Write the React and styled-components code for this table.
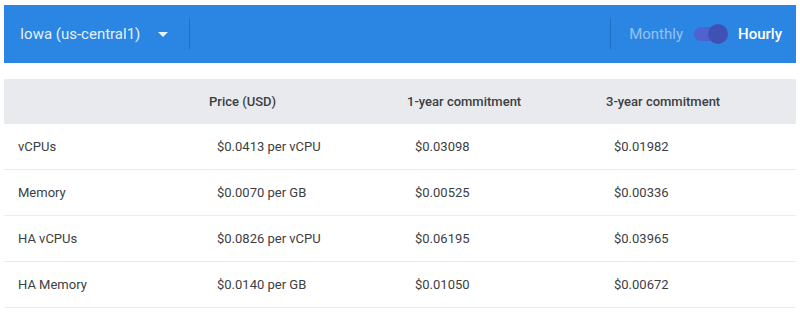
import React from "react";
import styled, { createGlobalStyle } from "styled-components";

const Global = createGlobalStyle`
  html, body { margin: 0; padding: 0; background: #fff; }
  body { font-family: Roboto, "Noto Sans", Arial, sans-serif; }
`;

const Page = styled.div`
  padding: 5px 4px 0 4px;
  width: 792px;
`;

const Bar = styled.div`
  height: 58px;
  background: #2b86e3;
  display: flex;
  align-items: center;
  color: #fff;
`;

const Region = styled.div`
  display: flex;
  align-items: center;
  padding-left: 16px;
  font-size: 15px;
  color: rgba(255, 255, 255, 0.9);
  width: 185px;
  box-sizing: border-box;
  height: 100%;
`;

const Arrow = styled.span`
  width: 0;
  height: 0;
  border-left: 5px solid transparent;
  border-right: 5px solid transparent;
  border-top: 5px solid rgba(255, 255, 255, 0.9);
  margin-left: 18px;
`;

const Divider = styled.div`
  width: 1px;
  height: 30px;
  background: rgba(20, 80, 150, 0.45);
`;

const Spacer = styled.div`
  flex: 1;
`;

const ToggleGroup = styled.div`
  display: flex;
  align-items: center;
  padding: 0 14px 0 18px;
  font-size: 15px;
`;

const ToggleLabel = styled.span`
  color: ${(p) => (p.$active ? "#fff" : "rgba(255,255,255,0.5)")};
  font-weight: ${(p) => (p.$active ? 500 : 400)};
`;

const Track = styled.span`
  position: relative;
  display: inline-block;
  width: 32px;
  height: 14px;
  border-radius: 7px;
  background: #4e63cf;
  margin: 0 12px 0 11px;
`;

const Knob = styled.span`
  position: absolute;
  right: -2px;
  top: -3px;
  width: 20px;
  height: 20px;
  border-radius: 50%;
  background: #3f51b5;
`;

const Table = styled.div`
  margin-top: 16px;
  display: grid;
  grid-template-columns: 198px 198px 199px 197px;
`;

const HeadCell = styled.div`
  background: #e8eaed;
  height: 45px;
  display: flex;
  align-items: center;
  padding-left: 7px;
  font-size: 13px;
  font-weight: 500;
  color: #3c4043;
`;

const Cell = styled.div`
  height: 45px;
  display: flex;
  align-items: center;
  padding-left: ${(p) => (p.$first ? "14px" : "15px")};
  font-size: 13px;
  color: #3c4043;
  border-bottom: 1px solid #ebebeb;
`;

const rows = [
  ["vCPUs", "$0.0413 per vCPU", "$0.03098", "$0.01982"],
  ["Memory", "$0.0070 per GB", "$0.00525", "$0.00336"],
  ["HA vCPUs", "$0.0826 per vCPU", "$0.06195", "$0.03965"],
  ["HA Memory", "$0.0140 per GB", "$0.01050", "$0.00672"],
];

export default function App() {
  return (
    <>
      <Global />
      <Page>
        <Bar>
          <Region>
            <span>Iowa (us-central1)</span>
            <Arrow />
          </Region>
          <Divider />
          <Spacer />
          <Divider />
          <ToggleGroup>
            <ToggleLabel>Monthly</ToggleLabel>
            <Track>
              <Knob />
            </Track>
            <ToggleLabel $active>Hourly</ToggleLabel>
          </ToggleGroup>
        </Bar>
        <Table>
          <HeadCell />
          <HeadCell>Price (USD)</HeadCell>
          <HeadCell>1-year commitment</HeadCell>
          <HeadCell>3-year commitment</HeadCell>
          {rows.map((r) =>
            r.map((c, i) => (
              <Cell key={r[0] + i} $first={i === 0}>
                {c}
              </Cell>
            ))
          )}
        </Table>
      </Page>
    </>
  );
}
